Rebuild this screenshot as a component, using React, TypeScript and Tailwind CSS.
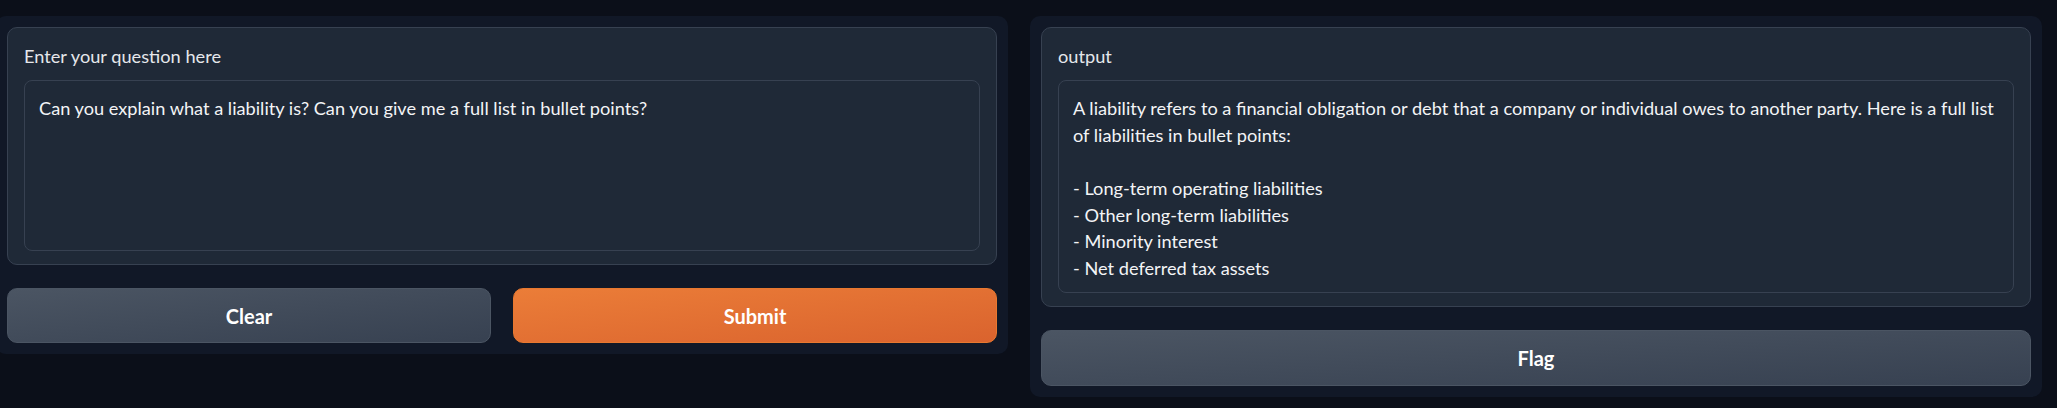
import React from 'react';

const font = { fontFamily: 'Lato, "Noto Sans", sans-serif' };

const outputLines = [
  'A liability refers to a financial obligation or debt that a company or individual owes to another party. Here is a full list',
  'of liabilities in bullet points:',
  '',
  '- Long-term operating liabilities',
  '- Other long-term liabilities',
  '- Minority interest',
  '- Net deferred tax assets',
];

const Block: React.FC<{ label: string; height: string; children: React.ReactNode }> = ({ label, height, children }) => (
  <div className="rounded-[10px] border border-[#374151] bg-[#1f2937] px-[16px] pt-[15px] pb-[13px]">
    <div className="text-[18.2px] leading-[27px] text-[#e5e7eb] mb-[10px]">{label}</div>
    <div className={`${height} rounded-[8px] border border-[#374151] bg-[#1f2937] px-[14px] pt-[14px] text-[18.2px] leading-[26.7px] text-[#f3f4f6]`}>
      {children}
    </div>
  </div>
);

const App: React.FC = () => {
  return (
    <div className="min-h-screen w-full bg-[#0b0f19] pt-[16px] overflow-hidden" style={font}>
      <div className="flex items-start gap-[22px]">
        <div className="-ml-[4px] w-[1012px] shrink-0 rounded-[10px] bg-[#111827] p-[11px] flex flex-col gap-[23px]">
          <Block label="Enter your question here" height="h-[171px]">
            Can you explain what a liability is? Can you give me a full list in bullet points?
          </Block>
          <div className="flex gap-[22px]">
            <button className="flex-1 h-[55px] rounded-[10px] border border-[#4b5563] bg-gradient-to-br from-[#4b5563] to-[#374151] text-[20px] font-bold text-white">
              Clear
            </button>
            <button className="flex-1 h-[55px] rounded-[10px] border border-[#e8782f] bg-gradient-to-br from-[#eb7d38] to-[#da632e] text-[20px] font-bold text-white">
              Submit
            </button>
          </div>
        </div>

        <div className="w-[1012px] shrink-0 rounded-[10px] bg-[#111827] p-[11px] flex flex-col gap-[23px]">
          <Block label="output" height="h-[213px]">
            {outputLines.map((line, i) => (
              <div key={i} className="whitespace-pre h-[26.7px]">{line}</div>
            ))}
          </Block>
          <button className="w-full h-[56px] rounded-[10px] border border-[#4b5563] bg-gradient-to-br from-[#4b5563] to-[#374151] text-[20px] font-bold text-white">
            Flag
          </button>
        </div>
      </div>
    </div>
  );
};

export default App;
